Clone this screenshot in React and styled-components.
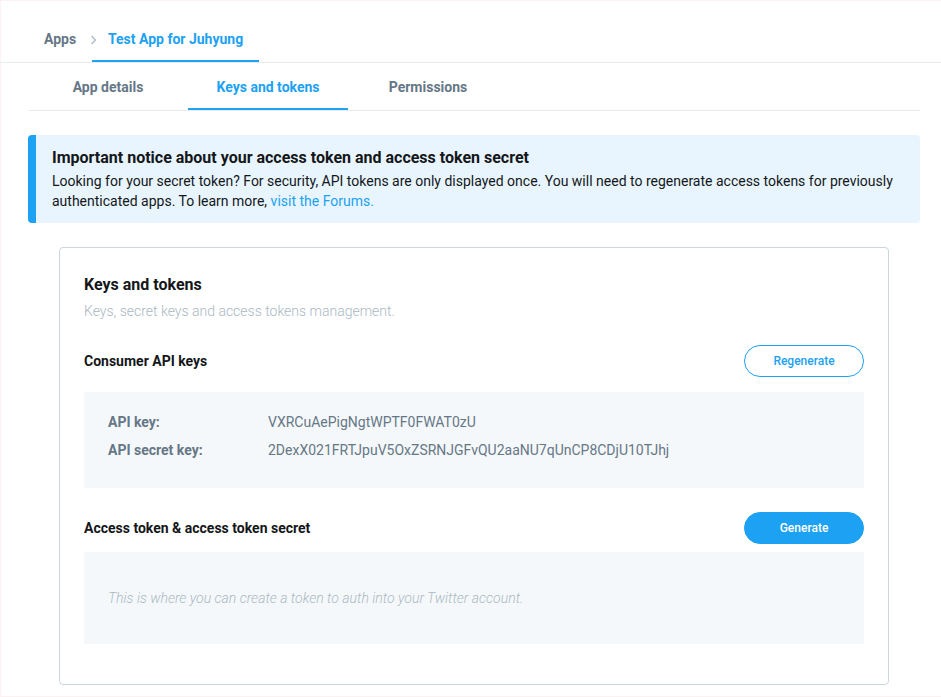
import React from "react";
import styled, { createGlobalStyle } from "styled-components";

const GlobalStyle = createGlobalStyle`
  * { box-sizing: border-box; }
  html, body { margin: 0; padding: 0; background: #ffffff; }
  body {
    font-family: Roboto, "Liberation Sans", Arial, sans-serif;
    font-size: 14px;
    color: #14171a;
    -webkit-font-smoothing: antialiased;
  }
`;

const Page = styled.div`
  min-height: 697px;
  background: #ffffff;
  box-shadow: inset 1px 1px 0 #fcf1f3, inset 0 -1px 0 #fcf1f3;
`;

const Breadcrumbs = styled.nav`
  display: flex;
  align-items: stretch;
  border-bottom: 1px solid #e6ecf0;
`;

const Crumb = styled.a`
  position: relative;
  display: block;
  font-size: 14px;
  font-weight: 700;
  line-height: 20px;
  text-decoration: none;
  cursor: pointer;
  color: ${(p) => (p.$active ? "#1da1f2" : "#657786")};
  padding: ${(p) => (p.$first ? "29px 0 11px 44px" : "29px 16px 11px")};
  width: ${(p) => (p.$first ? "92px" : "auto")};
  border-bottom: 2px solid ${(p) => (p.$active ? "#1da1f2" : "transparent")};
`;

const Chevron = styled.svg`
  position: absolute;
  left: -2px;
  top: 35px;
  width: 7px;
  height: 10px;
`;

const Tabs = styled.div`
  display: flex;
  margin: 0 21px 0 28px;
  border-bottom: 1px solid #e6ecf0;
`;

const Tab = styled.a`
  width: 160px;
  text-align: center;
  font-size: 14px;
  font-weight: 700;
  line-height: 20px;
  padding: 14px 0 11px;
  cursor: pointer;
  color: ${(p) => (p.$active ? "#1da1f2" : "#657786")};
  border-bottom: 2px solid ${(p) => (p.$active ? "#1da1f2" : "transparent")};
`;

const Content = styled.main`
  margin: 0 21px 0 28px;
  padding-top: 24px;
`;

const Notice = styled.section`
  background: #e8f5fe;
  border-left: 8px solid #1da1f2;
  border-radius: 4px;
  padding: 12px 16px 12px;
`;

const NoticeTitle = styled.h3`
  margin: 0 0 2px;
  font-size: 16px;
  font-weight: 700;
  line-height: 22px;
  color: #14171a;
`;

const NoticeText = styled.p`
  margin: 0;
  font-size: 14px;
  line-height: 20px;
  color: #14171a;
`;

const Link = styled.a`
  color: #1da1f2;
  text-decoration: none;
  cursor: pointer;
`;

const Card = styled.section`
  margin: 24px 31px 0;
  border: 1px solid #ccd6dd;
  border-radius: 4px;
  padding: 25px 24px 40px;
`;

const CardTitle = styled.h2`
  margin: 0;
  font-size: 16px;
  font-weight: 700;
  line-height: 24px;
  color: #14171a;
`;

const CardSubtitle = styled.p`
  margin: 4px 0 0;
  font-size: 14px;
  font-weight: 300;
  line-height: 20px;
  color: #aab8c2;
`;

const SectionHeader = styled.div`
  display: flex;
  align-items: center;
  justify-content: space-between;
  height: 32px;
  margin-top: 24px;
`;

const SectionTitle = styled.h4`
  margin: 0;
  font-size: 14px;
  font-weight: 700;
  line-height: 20px;
  color: #14171a;
`;

const Button = styled.button`
  width: 120px;
  height: 32px;
  border-radius: 16px;
  font-family: inherit;
  font-size: 12px;
  font-weight: 500;
  cursor: pointer;
  border: 1px solid #1da1f2;
  background: ${(p) => (p.$primary ? "#1da1f2" : "#ffffff")};
  color: ${(p) => (p.$primary ? "#ffffff" : "#1da1f2")};
`;

const InfoBox = styled.div`
  margin-top: ${(p) => p.$gap}px;
  background: #f5f8fa;
  padding: ${(p) => (p.$empty ? "36px 24px" : "20px 24px 20px")};
`;

const KeyRow = styled.div`
  display: grid;
  grid-template-columns: 160px 1fr;
  line-height: 20px;
  margin-bottom: 8px;
  color: #657786;
`;

const KeyLabel = styled.span`
  font-weight: 700;
`;

const KeyValue = styled.span`
  font-weight: 400;
`;

const Placeholder = styled.p`
  margin: 0;
  font-style: italic;
  font-weight: 300;
  line-height: 20px;
  color: #aab8c2;
`;

export default function App() {
  return (
    <Page>
      <GlobalStyle />
      <Breadcrumbs>
        <Crumb $first>Apps</Crumb>
        <Crumb $active>
          <Chevron viewBox="0 0 7 10" aria-hidden="true">
            <path d="M1.5 1 L5.5 5 L1.5 9" fill="none" stroke="#aab8c2" strokeWidth="1.2" />
          </Chevron>
          Test App for Juhyung
        </Crumb>
      </Breadcrumbs>
      <Tabs>
        <Tab>App details</Tab>
        <Tab $active>Keys and tokens</Tab>
        <Tab>Permissions</Tab>
      </Tabs>
      <Content>
        <Notice>
          <NoticeTitle>Important notice about your access token and access token secret</NoticeTitle>
          <NoticeText>
            Looking for your secret token? For security, API tokens are only displayed once. You will need to
            regenerate access tokens for previously authenticated apps. To learn more,{" "}
            <Link>visit the Forums.</Link>
          </NoticeText>
        </Notice>
        <Card>
          <CardTitle>Keys and tokens</CardTitle>
          <CardSubtitle>Keys, secret keys and access tokens management.</CardSubtitle>
          <SectionHeader>
            <SectionTitle>Consumer API keys</SectionTitle>
            <Button>Regenerate</Button>
          </SectionHeader>
          <InfoBox $gap={15}>
            <KeyRow>
              <KeyLabel>API key:</KeyLabel>
              <KeyValue>VXRCuAePigNgtWPTF0FWAT0zU</KeyValue>
            </KeyRow>
            <KeyRow>
              <KeyLabel>API secret key:</KeyLabel>
              <KeyValue>2DexX021FRTJpuV5OxZSRNJGFvQU2aaNU7qUnCP8CDjU10TJhj</KeyValue>
            </KeyRow>
          </InfoBox>
          <SectionHeader>
            <SectionTitle>Access token &amp; access token secret</SectionTitle>
            <Button $primary>Generate</Button>
          </SectionHeader>
          <InfoBox $gap={8} $empty>
            <Placeholder>This is where you can create a token to auth into your Twitter account.</Placeholder>
          </InfoBox>
        </Card>
      </Content>
    </Page>
  );
}
